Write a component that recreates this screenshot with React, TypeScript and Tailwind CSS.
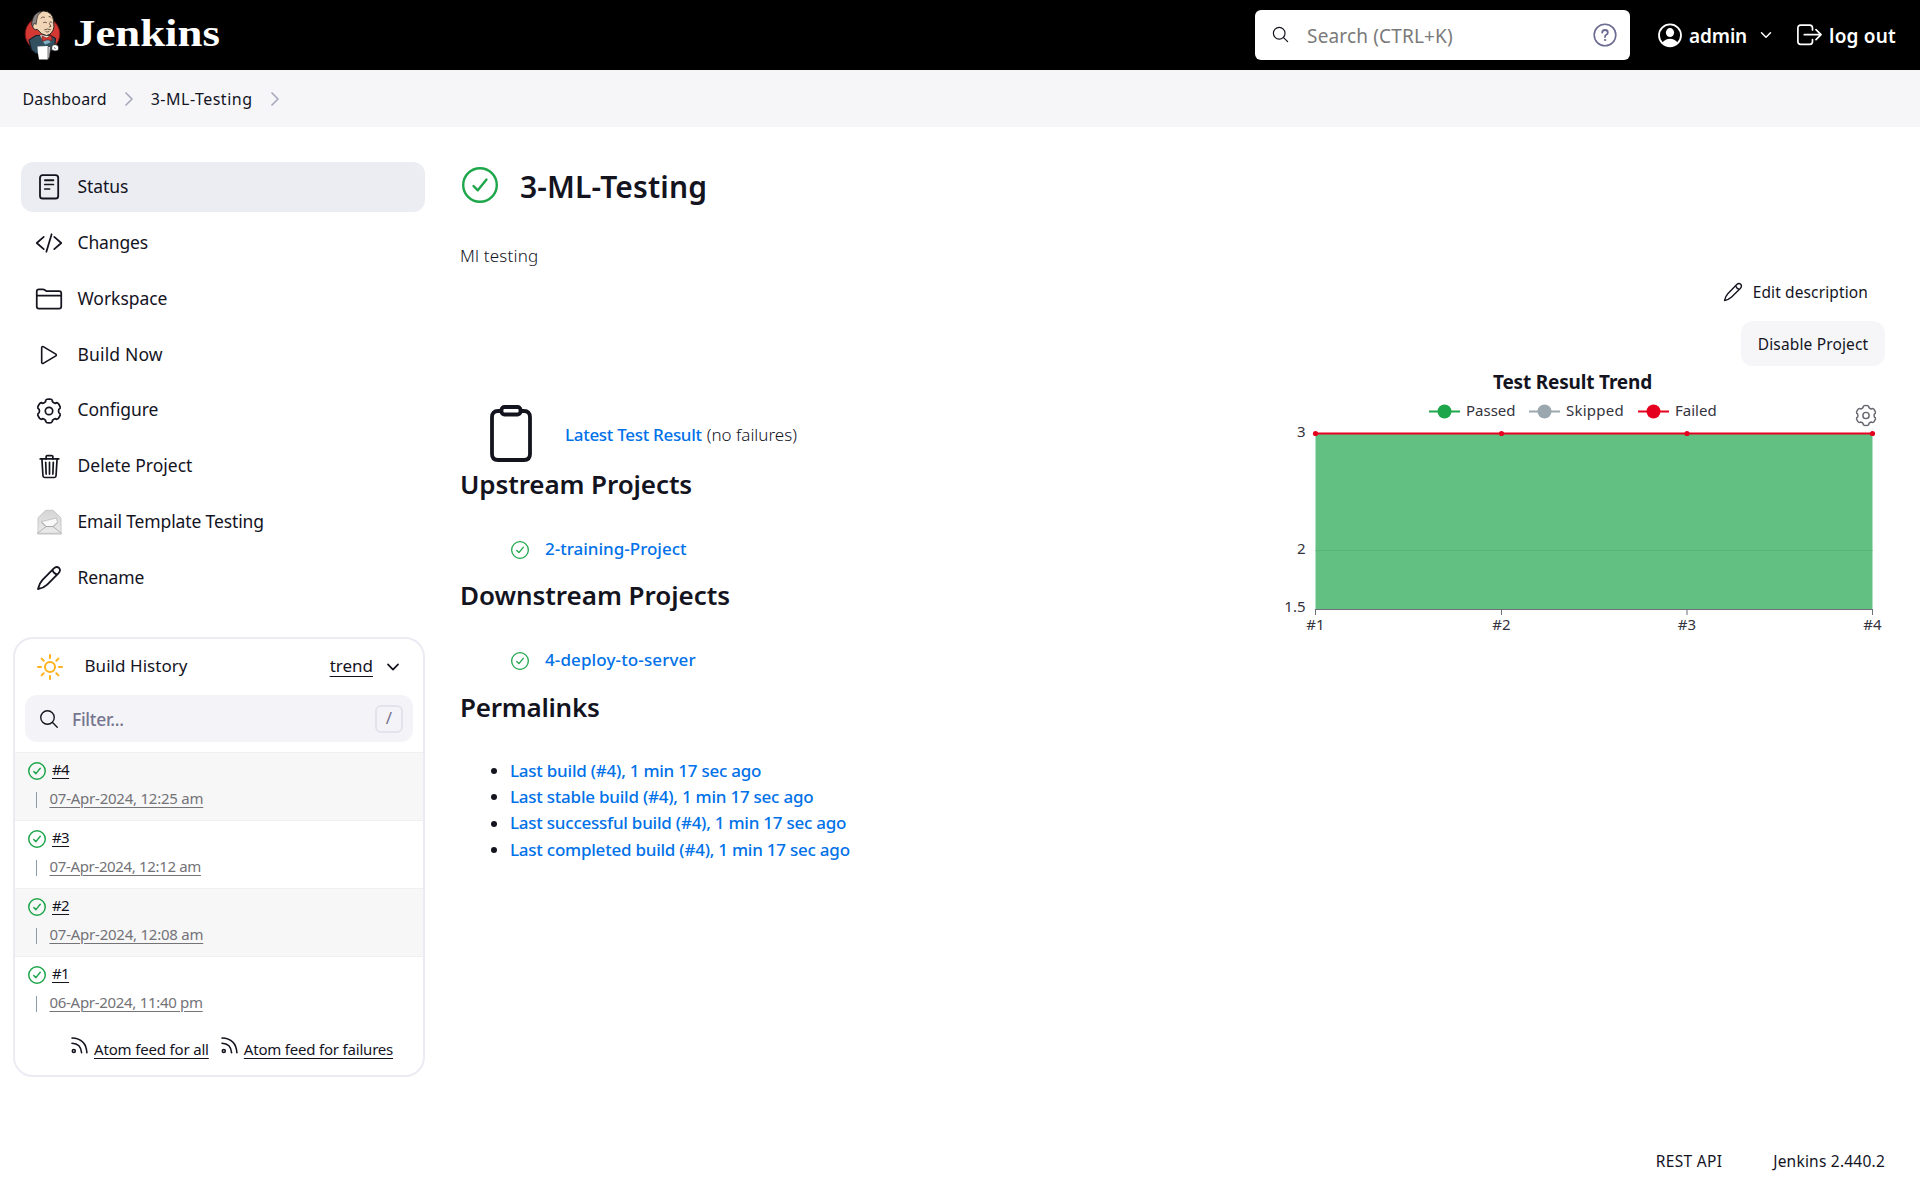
import type { ReactNode } from "react";
import {
  IoChevronDownOutline,
  IoCodeSlashOutline,
  IoFolderOutline,
  IoPlayOutline,
  IoSearchOutline,
  IoTrashOutline,
} from "react-icons/io5";

function JenkinsLogo() {
  return (
    <svg width="37" height="51" viewBox="0 0 37 51">
      <ellipse cx="18.5" cy="24" rx="17.3" ry="17" fill="#d33833" stroke="#6d1512" strokeWidth="1" />
      <path d="M5 30 L12 25.5 L26 25 L31.5 28.5 L30.5 38 L25 42.500 L12 43.500 L7.500 40 Z" fill="#335061" stroke="#16202a" strokeWidth="1.200" />
      <path d="M16 25 L20 33 L26 26Z" fill="#f1e9dc" />
      <path d="M18.500 31 L25 29.500 L27 32.500 L21 35Z" fill="#81b0c4" stroke="#335061" strokeWidth=".6" />
      <path d="M8 13 Q9 2 19.5 1 Q28.500 1.500 29.500 10.500 L30 17 Q28.500 24.500 22.500 25.500 Q17 25 13.500 19.500 Q9.500 20.500 8.500 16Z" fill="#f0d6b7" stroke="#2b2420" strokeWidth="1" />
      <path d="M8 11.500 Q10 2 18 1.400 Q12.500 5 12.800 9.500 L12 14.500 L10.500 13 L8.800 16 L7.700 15Z" fill="#8a8584" stroke="#231f20" strokeWidth=".7" />
      <path d="M17 8 Q18.500 6.300 20.500 7.200 M25 6.500 Q26.300 6 27.200 7.500 M19.500 12.500 Q21 11.500 22.500 12.600 M25.800 12 Q27 11.500 28 12.400 M25.300 13.500 L27 16.300 L25.300 17 M20.500 19.800 Q23 18.300 26.500 19.600 M22 21.800 Q23.500 22.500 25 21.600" fill="none" stroke="#4b382c" strokeWidth=".8" strokeLinecap="round" />
      <path d="M18 26 L22.500 28 L27.500 25.300 L28 30.500 L23 29.600 L18.500 31.200Z" fill="#d33833" stroke="#7d1714" strokeWidth=".7" />
      <path d="M13.500 36.500 L24 36 L24 49.500 L15 49.500 Q13.500 43 13.500 36.500Z" fill="#fff" />
      <path d="M24 36.500 L26.500 36.500 L25.500 47 L24 49.500Z" fill="#d8d8d8" stroke="#231f20" strokeWidth=".6" />
      <path d="M28 35.500 Q31 33.500 34 35.500 Q35.500 38 34 40.500 Q30.500 42 27.500 39.500Z" fill="#fff" stroke="#231f20" strokeWidth=".8" />
      <path d="M30 37.500 L31.500 38.500" stroke="#231f20" strokeWidth=".8" />
    </svg>
  );
}

function DocumentIcon() {
  return (
    <svg width="26" height="26" viewBox="0 0 26 26" fill="none" stroke="currentColor" strokeLinecap="round">
      <rect x="4" y="1.200" width="18.200" height="23.300" rx="2.600" strokeWidth="1.800" />
      <path d="M9 6.300H17.300" strokeWidth="2" />
      <path d="M8.800 10.500H17.400M8.800 15H13.600" strokeWidth="1.700" />
    </svg>
  );
}

const gearPath =
  [0, 60, 120, 180, 240, 300]
    .map((a) => {
      const pt = (deg: number, r: number) => {
        const t = ((a + deg - 90) * Math.PI) / 180;
        return `${(13 + r * Math.cos(t)).toFixed(2)} ${(13 + r * Math.sin(t)).toFixed(2)}`;
      };
      return `${a === 0 ? "M" : "L"}${pt(-20, 10)} Q${pt(-19, 11.7)} ${pt(-10, 11.9)} Q${pt(0, 12)} ${pt(10, 11.9)} Q${pt(19, 11.7)} ${pt(20, 10)} Q${pt(30, 9.2)} ${pt(40, 10)}`;
    })
    .join(" ") + "Z";

function GearIcon({ size, color, x, y }: { size: number; color: string; x?: number; y?: number }) {
  return (
    <svg x={x} y={y} width={size} height={size} viewBox="0 0 26 26" fill="none" stroke={color} strokeWidth="1.700" strokeLinejoin="round">
      <path d={gearPath} />
      <circle cx="13" cy="13" r="3.700" />
    </svg>
  );
}

function SunIcon() {
  return (
    <svg width="26" height="26" viewBox="0 0 26 26" fill="none" stroke="#ffb21a" strokeWidth="2" strokeLinecap="round">
      <circle cx="13" cy="13" r="5" />
      <path d="M13 1V4M13 22V25M1 13H4M22 13H25M4.600 4.600L6.700 6.700M19.300 19.300L21.400 21.400M4.600 21.400L6.700 19.300M19.300 6.700L21.400 4.600" />
    </svg>
  );
}

function PenIcon({ size }: { size: number }) {
  return (
    <svg width={size} height={size} viewBox="0 0 26 26" fill="none" stroke="currentColor" strokeWidth="1.800" strokeLinejoin="round">
      <path d="M2 24 C2.800 20 4 17.500 6.500 14.900 L17.600 3.600 Q20.500 .900 23 2.900 Q25.200 5.400 22.400 8.400 L11.200 19.600 C8.600 22.100 6 23.300 2 24Z" />
      <path d="M16.300 5 Q17.500 8.500 21.200 9.600" />
    </svg>
  );
}

function MailIcon() {
  return (
    <svg width="26" height="26" viewBox="0 0 26 26">
      <defs>
        <linearGradient id="mail" x1="0" y1="0" x2="0" y2="1">
          <stop offset="0" stopColor="#d4d4d4" />
          <stop offset="1" stopColor="#ebebeb" />
        </linearGradient>
      </defs>
      <rect x="1" y="23" width="25" height="2.500" rx="1.200" fill="#c4c4c4" />
      <path d="M2 10 Q2 8.800 3 7.800 L9.500 1.300 H17 L24 7.800 Q25 8.800 25 10 V24.200 H2Z" fill="url(#mail)" stroke="#c4c4c4" strokeWidth=".9" />
      <path d="M5.500 12.500 L20.500 9 L21.500 13.500 L17 17.500 H10Z" fill="#f8f8f8" stroke="#b9b9b9" strokeWidth=".8" />
      <path d="M2.500 23.500 L10 17.500 H17 L24.500 23.500 M5.500 13.500 L10 17.500 M21.500 13.500 L17 17.500" fill="none" stroke="#a3a3a3" strokeWidth=".8" />
    </svg>
  );
}

function CheckCircle({ size, stroke }: { size: number; stroke: number }) {
  return (
    <svg className="shrink-0" width={size} height={size} viewBox="0 0 36 36" fill="none" stroke="#1ea64b" strokeWidth={stroke} strokeLinecap="round" strokeLinejoin="round">
      <circle cx="18" cy="18" r={18 - stroke / 2} />
      <path d="M11.500 19 L15.800 23.300 L24.500 12.600" />
    </svg>
  );
}

function RssIcon() {
  return (
    <svg className="-translate-y-[4px]" width="17" height="17" viewBox="0 0 17 17" fill="none" stroke="#14141f" strokeWidth="1.600" strokeLinecap="round">
      <circle cx="2.800" cy="14" r="1.500" />
      <path d="M1 6.200 Q10 6.500 10.600 15.800M1 1 Q15 1.500 15.900 15.800" />
    </svg>
  );
}

function ClipboardIcon() {
  return (
    <svg className="-translate-y-px" width="42" height="57" viewBox="0 0 42 57" fill="none" stroke="#14141f" strokeWidth="3.800" strokeLinejoin="round">
      <path d="M11.500 6 H8 Q2 6 2 12 V49 Q2 55 8 55 H34 Q40 55 40 49 V12 Q40 6 34 6 H30.500" />
      <rect x="11.500" y="2" width="19" height="7.500" rx="3" />
    </svg>
  );
}

function BreadcrumbChevron({ className }: { className: string }) {
  return (
    <svg className={className} width="8" height="14" viewBox="0 0 8 14" fill="none" stroke="#a9a9bd" strokeWidth="1.700" strokeLinecap="round" strokeLinejoin="round">
      <path d="M1 1 L7 7 L1 13" />
    </svg>
  );
}

function HelpIcon() {
  return (
    <svg width="24" height="24" viewBox="0 0 24 24" fill="none" stroke="#6b6b93" strokeLinecap="round">
      <circle cx="12" cy="12" r="10.800" strokeWidth="1.600" />
      <path d="M9.200 9.600 Q9.300 7 12 7 Q14.800 7 14.800 9.400 Q14.800 11 13.200 11.800 Q12 12.500 12 14" strokeWidth="1.800" />
      <circle cx="12" cy="17" r=".7" fill="#6b6b93" strokeWidth=".8" />
    </svg>
  );
}

function UserIcon() {
  return (
    <svg width="24" height="25" viewBox="0 0 24 25">
      <circle cx="12" cy="12.300" r="11" fill="none" stroke="#fff" strokeWidth="1.800" />
      <ellipse cx="12" cy="9.600" rx="4.100" ry="4.500" fill="#fff" />
      <path d="M4.200 19.500 Q7.500 15.700 12 15.700 Q16.500 15.700 19.800 19.500 Q16.500 23.500 12 23.500 Q7.500 23.500 4.200 19.500Z" fill="#fff" />
    </svg>
  );
}

function LogoutIcon() {
  return (
    <svg width="25" height="22" viewBox="0 0 25 22" fill="none" stroke="#fff" strokeWidth="1.700" strokeLinecap="round" strokeLinejoin="round">
      <path d="M15.500 6 V4 Q15.500 1.200 12.700 1.200 H3.700 Q.9 1.200 .9 4 V17.500 Q.9 20.300 3.700 20.300 H12.700 Q15.500 20.300 15.500 17.500 V15.500" />
      <path d="M7.300 10.700 H23.800 M19 5.700 L24 10.700 L19 15.700" />
    </svg>
  );
}

const tasks: { label: string; icon: ReactNode; tracking: string }[] = [
  { label: "Status", icon: <DocumentIcon />, tracking: "tracking-[-0.05px]" },
  { label: "Changes", icon: <IoCodeSlashOutline size={28} />, tracking: "tracking-[-0.15px]" },
  { label: "Workspace", icon: <IoFolderOutline size={28} />, tracking: "tracking-[-0.05px]" },
  { label: "Build Now", icon: <IoPlayOutline size={26} />, tracking: "tracking-[0.15px]" },
  { label: "Configure", icon: <GearIcon size={26} color="#14141f" />, tracking: "tracking-[-0.05px]" },
  { label: "Delete Project", icon: <IoTrashOutline size={27} />, tracking: "tracking-normal" },
  { label: "Email Template Testing", icon: <MailIcon />, tracking: "tracking-[-0.13px]" },
  { label: "Rename", icon: <PenIcon size={26} />, tracking: "tracking-[-0.15px]" },
];

const builds = [
  { id: "#4", date: "07-Apr-2024, 12:25 am", tracking: "tracking-[-0.24px]" },
  { id: "#3", date: "07-Apr-2024, 12:12 am", tracking: "tracking-[-0.35px]" },
  { id: "#2", date: "07-Apr-2024, 12:08 am", tracking: "tracking-[-0.24px]" },
  { id: "#1", date: "06-Apr-2024, 11:40 pm", tracking: "tracking-[-0.3px]" },
];

const permalinks = ["Last build", "Last stable build", "Last successful build", "Last completed build"];

function Header() {
  return (
    <header className="flex h-[70px] shrink-0 items-center bg-black pr-[24px] pl-[24px] text-white">
      <JenkinsLogo />
      <span className="ml-[12px] origin-left scale-x-[1.21] -translate-y-[2px] font-['Liberation_Serif',serif] text-[37px] leading-none font-bold">
        Jenkins
      </span>
      <div className="ml-auto flex h-[50px] w-[375px] items-center rounded-md bg-white pr-[13px] pl-4">
        <IoSearchOutline className="-translate-y-px text-[#14141f]" size={19} />
        <span className="ml-[17px] translate-y-px text-[19px] leading-7 tracking-[0.15px] whitespace-nowrap text-[#7a7a7a]">Search (CTRL+K)</span>
        <span className="ml-auto"><HelpIcon /></span>
      </div>
      <div className="ml-[28px] flex items-center text-[19px] font-semibold">
        <UserIcon />
        <span className="ml-[7px] translate-y-px tracking-[-0.15px]">admin</span>
        <IoChevronDownOutline className="ml-[11px]" size={16} />
      </div>
      <div className="ml-[23px] flex items-center text-[19px] font-semibold">
        <LogoutIcon />
        <span className="ml-[7px] translate-y-px tracking-[0.2px]">log out</span>
      </div>
    </header>
  );
}

function Sidebar() {
  return (
    <aside className="w-[425px] shrink-0 pt-[35px]">
      <nav className="ml-[21px] flex flex-col gap-[5.9px]">
        {tasks.map((t, i) => (
          <a key={t.label} className={i === 0 ? "flex h-[50px] items-center rounded-xl bg-[#ecedf3] pl-[15px]" : "flex h-[50px] items-center rounded-xl pl-[15px]"}>
            <span className="flex w-[26px] shrink-0 items-center justify-center [&>svg]:shrink-0">{t.icon}</span>
            <span className={`ml-[15.500px] -translate-y-px text-[17.5px] ${t.tracking}`}>{t.label}</span>
          </a>
        ))}
      </nav>

      <section className="mt-[34px] ml-[13px] h-[440px] overflow-hidden rounded-[20px] border-2 border-[#ebebf3]">
        <div className="flex h-[56px] items-center pr-[21px] pl-[22px] text-[17px]">
          <SunIcon />
          <span className="ml-[21.500px] -translate-y-px tracking-[0.05px]">Build History</span>
          <span className="ml-auto -translate-y-px underline decoration-1 underline-offset-[4px]">trend</span>
          <IoChevronDownOutline className="ml-[11px]" size={18} />
        </div>
        <div className="mx-[10px] flex h-[47px] items-center rounded-xl bg-[#f3f3f8] pr-[10px] pl-[13px]">
          <IoSearchOutline size={22} />
          <span className="ml-[12px] text-[17.5px] font-medium tracking-[-0.3px] text-[#75758f]">Filter...</span>
          <span className="ml-auto flex h-7 w-7 items-center justify-center rounded-md border-2 border-[#e3e3ee] pb-px text-[17px] text-[#75758f]">/</span>
        </div>
        <ul className="mt-[10px] text-[15px]">
          {builds.map((b, i) => (
            <li key={b.id} className={i % 2 === 0 ? "h-[68px] border-t border-[#f0f0f0] bg-[#f7f7f7] pl-[13px]" : "h-[68px] border-t border-[#f0f0f0] bg-white pl-[13px]"}>
              <div className="flex h-[30px] items-center pt-[6px]">
                <CheckCircle size={18} stroke={3} />
                <span className="ml-[6px] -translate-y-[2px] tracking-[-0.6px] underline decoration-1 underline-offset-[3px]">{b.id}</span>
              </div>
              <div className="flex h-[28px] items-center">
                <span className="ml-[8px] h-4 w-px translate-y-[3px] bg-[#8a9baa]" />
                <span className={`ml-[12.500px] translate-y-px text-[#737378] underline decoration-1 underline-offset-[3px] ${b.tracking}`}>{b.date}</span>
              </div>
            </li>
          ))}
        </ul>
        <div className="flex h-[44px] items-center pt-[6px] pl-[56px] text-[15px]">
          <RssIcon />
          <span className="ml-[6px] tracking-[-0.17px] underline decoration-1 underline-offset-[3px]">Atom feed for all</span>
          <span className="w-[12px]" />
          <RssIcon />
          <span className="ml-[6px] tracking-[-0.2px] underline decoration-1 underline-offset-[3px]">Atom feed for failures</span>
        </div>
      </section>
    </aside>
  );
}

const legend = [
  { label: "Passed", color: "#1ea64b", x: 159 },
  { label: "Skipped", color: "#9ba7af", x: 259 },
  { label: "Failed", color: "#e6001f", x: 368 },
];

const ticks = [45.5, 231.5, 417, 602.5];

/* Area chart of the test results of each build. */
function TrendChart() {
  return (
    <svg className="block" width="615" height="270" viewBox="0 0 615 270" fill="#33333d" fontSize="15">
      <text x="302.500" y="19" fontSize="19" fontWeight="700" fill="#14141f" textAnchor="middle" letterSpacing="-0.18">Test Result Trend</text>
      {legend.map((l) => (
        <g key={l.label}>
          <path d={`M${l.x} 41.500h31`} stroke={l.color} strokeWidth="2" />
          <circle cx={l.x + 15.5} cy="41.500" r="7" fill={l.color} />
          <text x={l.x + 37} y="46" letterSpacing={l.label === "Skipped" ? 0.25 : 0}>{l.label}</text>
        </g>
      ))}
      <rect x="45.500" y="63.500" width="557" height="175.500" fill="#62c083" />
      <path d="M45.500 180.500H602.500" stroke="#58b678" />
      <path d="M45.500 239.500H603" stroke="#6e7079" />
      {ticks.map((x, i) => (
        <g key={x}>
          <path d={`M${x} 239v6`} stroke="#6e7079" />
          <text x={x} y="260" textAnchor="middle">{`#${i + 1}`}</text>
        </g>
      ))}
      <path d="M45.500 63.500H602.500" stroke="#e6001f" strokeWidth="2.200" />
      {ticks.map((x) => (
        <circle key={x} cx={x} cy="63.500" r="2.600" fill="#e6001f" />
      ))}
      <text x="35.500" y="67" textAnchor="end">3</text>
      <text x="35.500" y="184" textAnchor="end">2</text>
      <text x="35.500" y="242" textAnchor="end">1.5</text>
      <GearIcon x={585} y={34.500} size={22} color="#666670" />
    </svg>
  );
}

function Heading({ children, className }: { children: string; className: string }) {
  return <h2 className={`h-[38px] text-[26px] leading-[38px] font-semibold ${className}`}>{children}</h2>;
}

function Project({ name, className }: { name: string; className: string }) {
  return (
    <div className="mt-[33px] flex h-[26px] items-center pt-px pl-[51px] text-[17px] font-medium text-[#0071e8]">
      <span className="translate-y-px"><CheckCircle size={18} stroke={2.6} /></span>
      <span className={`ml-[16px] ${className}`}>{name}</span>
    </div>
  );
}

export default function App() {
  return (
    <div className="flex h-[1200px] w-[1920px] flex-col overflow-hidden bg-white font-['Noto_Sans',sans-serif] text-[#14141f]">
      <Header />
      <div className="flex h-[57px] shrink-0 items-center bg-[#f6f6f9] pl-[22.500px] text-base">
        <span className="tracking-[0.15px]">Dashboard</span>
        <BreadcrumbChevron className="mr-[18px] ml-[18px]" />
        <span className="tracking-[0.5px]">3-ML-Testing</span>
        <BreadcrumbChevron className="ml-[18px]" />
      </div>

      <div className="flex flex-1">
        <Sidebar />
        <main className="ml-[35px] flex w-[1425px] flex-col">
          <div className="flex justify-between">
            <div className="pt-[34px]">
              <div className="flex h-[50px] items-center pl-[2px]">
                <span className="-translate-y-px"><CheckCircle size={36} stroke={2.4} /></span>
                <h1 className="ml-[22px] translate-y-px text-[30px] leading-[50px] font-semibold tracking-[0.15px]">3-ML-Testing</h1>
              </div>
              <p className="mt-[32px] h-[26px] text-[17px] leading-[26px] font-light tracking-[0.2px]">Ml testing</p>
              <div className="mt-[135.500px] flex h-[60px] items-center pl-[30px] text-[17px]">
                <ClipboardIcon />
                <span className="ml-[33px] font-medium tracking-[-0.3px] text-[#0071e8]">Latest Test Result</span>
                <span className="ml-[5px] font-light">(no failures)</span>
              </div>
              <Heading className="tracking-[-0.1px]">Upstream Projects</Heading>
              <Project className="tracking-normal" name="2-training-Project" />
              <Heading className="mt-[14px] tracking-[-0.04px]">Downstream Projects</Heading>
              <Project className="tracking-[0.12px]" name="4-deploy-to-server" />
              <Heading className="mt-[15px] tracking-[-0.25px]">Permalinks</Heading>
              <ul className="mt-[32px] text-[17px] leading-[26.4px] font-medium tracking-[-0.235px] text-[#0071e8]">
                {permalinks.map((p) => (
                  <li key={p} className="flex items-center pl-[31px]">
                    <span className="mr-[13px] h-[6px] w-[6px] rounded-full bg-[#14141f]" />
                    {p} (#4), 1 min 17 sec ago
                  </li>
                ))}
              </ul>
            </div>

            <div className="flex w-[615px] shrink-0 flex-col pt-[147px] text-[15.500px]">
              <div className="flex h-[36px] items-center justify-end pr-[17px]">
                <PenIcon size={20} />
                <span className="ml-[10px] translate-y-px tracking-[0.12px]">Edit description</span>
              </div>
              <div className="mt-[11px] flex h-[45px] w-[144px] items-center justify-center self-end rounded-xl bg-[#f6f6f9] pt-[2px] tracking-[0.15px]">
                Disable Project
              </div>
              <div className="mt-[4px]"><TrendChart /></div>
            </div>
          </div>
        </main>
      </div>

      <footer className="flex h-[79px] shrink-0 items-center justify-end gap-[51px] pt-[2px] pr-[35px] text-[15.500px]">
        <span className="tracking-[0.3px]">REST API</span>
        <span className="tracking-[0.22px]">Jenkins 2.440.2</span>
      </footer>
    </div>
  );
}
